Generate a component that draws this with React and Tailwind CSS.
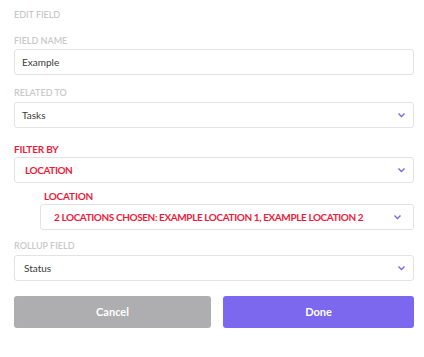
import React from 'react';

const Chevron = () => (
  <svg viewBox="0 0 7 5" className="w-[7px] h-[5px] text-[#7b68ee]" fill="currentColor">
    <path d="M0 1 L1 0 L3.5 2.4 L6 0 L7 1 L3.5 4.4 Z" />
  </svg>
);

const Label = ({ children, red }) => (
  <div
    className={
      red
        ? 'text-[10px] font-bold uppercase text-[#ef1b3c] leading-[12px] tracking-[-0.2px]'
        : 'text-[9px] font-semibold uppercase text-[#c9c9c9] leading-[10px]'
    }
  >
    {children}
  </div>
);

const Box = ({ children, chevron, red, className = '' }) => (
  <div
    className={`flex items-center justify-between h-[26px] border border-[#e3e3e3] rounded-[3px] bg-white ${className}`}
  >
    <span
      className={
        red
          ? 'text-[10px] font-bold uppercase tracking-[-0.4px] text-[#ef1b3c]'
          : 'text-[10px] text-[#3a3a3a]'
      }
    >
      {children}
    </span>
    {chevron && <Chevron />}
  </div>
);

const App = () => {
  return (
    <div className="w-[424px] h-[357px] bg-white pl-[14px] pr-[10px] pt-[10px] font-['Lato',sans-serif]">
      <div className="text-[9px] uppercase text-[#c0c0c0] leading-[10px]">Edit Field</div>

      <div className="mt-[16px]">
        <Label>Field Name</Label>
        <Box className="mt-[3px] pl-[7px] pr-[8px]">Example</Box>
      </div>

      <div className="mt-[13px]">
        <Label>Related To</Label>
        <Box className="mt-[4px] pl-[7px] pr-[8px]" chevron>Tasks</Box>
      </div>

      <div className="mt-[15px]">
        <Label red>Filter By</Label>
        <Box className="mt-[2px] pl-[10px] pr-[8px]" chevron red>Location</Box>
      </div>

      <div className="mt-[7px] ml-[26px]">
        <div className="pl-[4px]">
          <Label red>Location</Label>
        </div>
        <Box className="mt-[2px] pl-[13px] pr-[12px]" chevron red>
          2 Locations chosen: Example Location 1, Example Location 2
        </Box>
      </div>

      <div className="mt-[11px]">
        <Label>Rollup Field</Label>
        <Box className="mt-[4px] pl-[9px] pr-[8px]" chevron>Status</Box>
      </div>

      <div className="mt-[15px] flex gap-[12px]">
        <button className="w-[197px] h-[32px] rounded-[3px] bg-[#aeadb0] text-white text-[11px] font-bold">
          Cancel
        </button>
        <button className="flex-1 h-[32px] rounded-[3px] bg-[#7b68ee] text-white text-[11px] font-bold">
          Done
        </button>
      </div>
    </div>
  );
};

export default App;
